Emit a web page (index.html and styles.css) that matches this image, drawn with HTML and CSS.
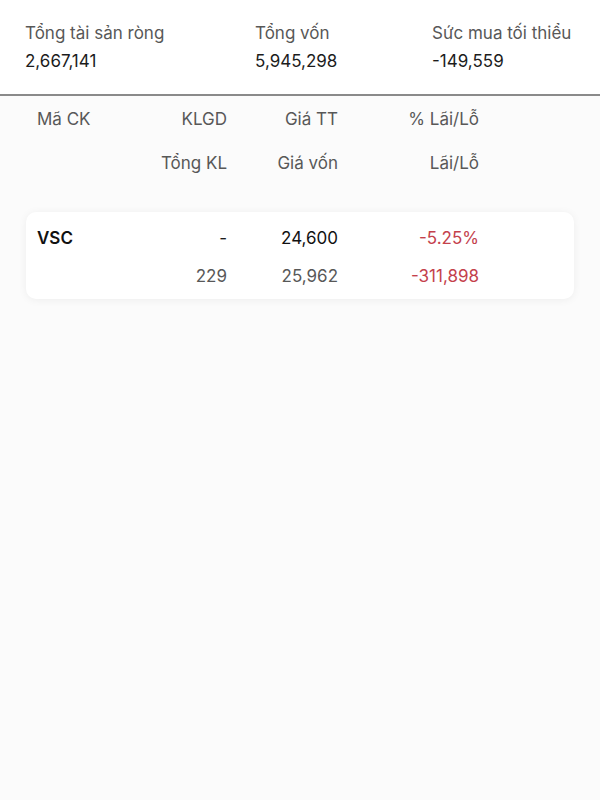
FILE: index.html
```html
<!DOCTYPE html>
<html lang="vi">
<head>
    <meta charset="UTF-8">
    <title>Danh mục</title>
    <meta name="viewport" content="width=device-width, initial-scale=1.0">
    <link rel="stylesheet" href="styles.css">
</head>
<body>
    <div class="summary">
        <div class="stat">
            <div class="stat-label">Tổng tài sản ròng</div>
            <div class="stat-value">2,667,141</div>
        </div>
        <div class="stat">
            <div class="stat-label">Tổng vốn</div>
            <div class="stat-value">5,945,298</div>
        </div>
        <div class="stat">
            <div class="stat-label">Sức mua tối thiểu</div>
            <div class="stat-value">-149,559</div>
        </div>
    </div>
    <div class="portfolio">
        <div class="grid head">
            <div>Mã CK</div>
            <div class="num">KLGD</div>
            <div class="num">Giá TT</div>
            <div class="num">% Lãi/Lỗ</div>
        </div>
        <div class="grid head">
            <div></div>
            <div class="num">Tổng KL</div>
            <div class="num">Giá vốn</div>
            <div class="num">Lãi/Lỗ</div>
        </div>
        <div class="card">
            <div class="grid row">
                <div class="symbol">VSC</div>
                <div class="num">-</div>
                <div class="num strong">24,600</div>
                <div class="num loss">-5.25%</div>
            </div>
            <div class="grid row">
                <div></div>
                <div class="num muted">229</div>
                <div class="num muted">25,962</div>
                <div class="num loss">-311,898</div>
            </div>
        </div>
    </div>
</body>
</html>
```

FILE: styles.css
```css
html { box-sizing: border-box; }
*, *::before, *::after { box-sizing: inherit; }
body {
    margin: 0;
    min-height: 100vh;
    background: #fbfbfb;
    font-family: Inter, Roboto, 'Liberation Sans', Arial, sans-serif;
    font-size: 17px;
    color: #1c1c1c;
}
.summary {
    background: #fff;
    display: grid;
    grid-template-columns: 230px 177px 1fr;
    padding: 19px 0 19px 25px;
    border-bottom: 2px solid #8a8a8a;
}
.stat-label {
    line-height: 28px;
    color: #585858;
}
.stat-value {
    line-height: 28px;
    color: #1c1c1c;
}
.portfolio {
    padding: 1px 26px 0;
}
.grid {
    display: grid;
    grid-template-columns: 90px 100px 111px 141px;
    padding-left: 11px;
}
.head {
    height: 44px;
    align-items: center;
    color: #585858;
}
.num {
    text-align: right;
}
.card {
    margin-top: 27px;
    background: #fff;
    border-radius: 10px;
    box-shadow: 0 1px 8px rgba(0,0,0,0.06);
    padding: 7px 0 4px;
}
.row {
    height: 38px;
    align-items: center;
}
.symbol {
    font-weight: 600;
    color: #111;
}
.strong {
    color: #111;
}
.muted {
    color: #585858;
}
.loss {
    color: #c4414c;
}
```
